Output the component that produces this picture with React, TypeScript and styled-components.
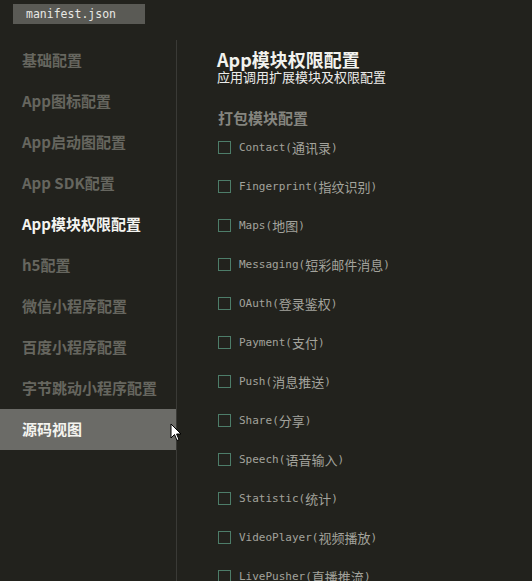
import React from "react";
import styled, { createGlobalStyle } from "styled-components";

const Global = createGlobalStyle`
  html, body { margin: 0; padding: 0; background: #22221d; }
  body { font-family: "Noto Sans CJK SC", "Noto Sans", sans-serif; overflow: hidden; }
`;

const Page = styled.div`
  width: 532px;
  height: 581px;
  background: #22221d;
  display: flex;
  flex-direction: column;
  overflow: hidden;
  position: relative;
`;

const TabBar = styled.div`
  height: 40px;
  display: flex;
  align-items: flex-start;
  padding: 4px 0 0 13px;
  box-sizing: border-box;
`;

const Tab = styled.div`
  width: 132px;
  height: 20px;
  background: #5a5a55;
  color: #e8e8e4;
  font-family: "DejaVu Sans Mono", "Liberation Mono", monospace;
  font-size: 11.5px;
  line-height: 20px;
  padding-left: 13px;
  box-sizing: border-box;
`;

const Main = styled.div`
  flex: 1;
  display: flex;
  min-height: 0;
`;

const Sidebar = styled.nav`
  width: 176px;
  flex: none;
  border-right: 1px solid #3a3a36;
  display: flex;
  flex-direction: column;
`;

const NavItem = styled.div<{ $active?: boolean; $selected?: boolean }>`
  height: 41px;
  display: flex;
  align-items: center;
  padding: 0 0 2px 22px;
  box-sizing: border-box;
  font-size: 15px;
  font-weight: 700;
  color: ${(p) => (p.$active || p.$selected ? "#f4f4f0" : "#66665f")};
  background: ${(p) => (p.$selected ? "#6b6b67" : "transparent")};
`;

const Content = styled.section`
  flex: 1;
  padding: 9px 0 0 40px;
  display: flex;
  flex-direction: column;
`;

const Title = styled.h1`
  margin: 0;
  font-size: 18px;
  line-height: 20px;
  font-weight: 700;
  color: #f2f2ee;
`;

const Subtitle = styled.div`
  font-size: 13px;
  line-height: 16px;
  color: #ececea;
`;

const SectionTitle = styled.h2`
  margin: 23px 0 0 1px;
  font-size: 15px;
  line-height: 20px;
  font-weight: 700;
  color: #85857f;
`;

const List = styled.div`
  display: flex;
  flex-direction: column;
  margin-top: 0;
`;

const Row = styled.label`
  height: 39px;
  display: flex;
  align-items: center;
  gap: 8px;
  padding-left: 1px;
`;

const Box = styled.span`
  width: 13px;
  height: 13px;
  box-sizing: border-box;
  border: 1px solid #4d7d69;
  flex: none;
`;

const Label = styled.span`
  display: flex;
  align-items: center;
  font-family: "DejaVu Sans Mono", "Liberation Mono", monospace;
  font-size: 11px;
  line-height: 16px;
  color: #a3a39c;
  white-space: nowrap;
`;

const Cjk = styled.span`
  font-family: "Noto Sans CJK SC", sans-serif;
  font-size: 13px;
  line-height: 16px;
`;

const Cursor = styled.svg`
  position: absolute;
  left: 170px;
  top: 423px;
`;

const navItems = [
  "基础配置",
  "App图标配置",
  "App启动图配置",
  "App SDK配置",
  "App模块权限配置",
  "h5配置",
  "微信小程序配置",
  "百度小程序配置",
  "字节跳动小程序配置",
  "源码视图",
];

const modules: [string, string][] = [
  ["Contact", "通讯录"],
  ["Fingerprint", "指纹识别"],
  ["Maps", "地图"],
  ["Messaging", "短彩邮件消息"],
  ["OAuth", "登录鉴权"],
  ["Payment", "支付"],
  ["Push", "消息推送"],
  ["Share", "分享"],
  ["Speech", "语音输入"],
  ["Statistic", "统计"],
  ["VideoPlayer", "视频播放"],
  ["LivePusher", "直播推流"],
];

export default function App() {
  return (
    <Page>
      <Global />
      <TabBar>
        <Tab>manifest.json</Tab>
      </TabBar>
      <Main>
        <Sidebar>
          {navItems.map((n, i) => (
            <NavItem key={n} $active={i === 4} $selected={i === 9}>
              {n}
            </NavItem>
          ))}
        </Sidebar>
        <Content>
          <Title>App模块权限配置</Title>
          <Subtitle>应用调用扩展模块及权限配置</Subtitle>
          <SectionTitle>打包模块配置</SectionTitle>
          <List>
            {modules.map(([en, zh]) => (
              <Row key={en}>
                <Box />
                <Label>
                  {en}(<Cjk>{zh}</Cjk>)
                </Label>
              </Row>
            ))}
          </List>
        </Content>
      </Main>
      <Cursor width="12" height="19" viewBox="0 0 12 19">
        <path d="M1 1 L1 15 L4.5 11.5 L7 17.5 L9 16.6 L6.6 11 L11 11 Z" fill="#fff" stroke="#000" strokeWidth="1" />
      </Cursor>
    </Page>
  );
}
